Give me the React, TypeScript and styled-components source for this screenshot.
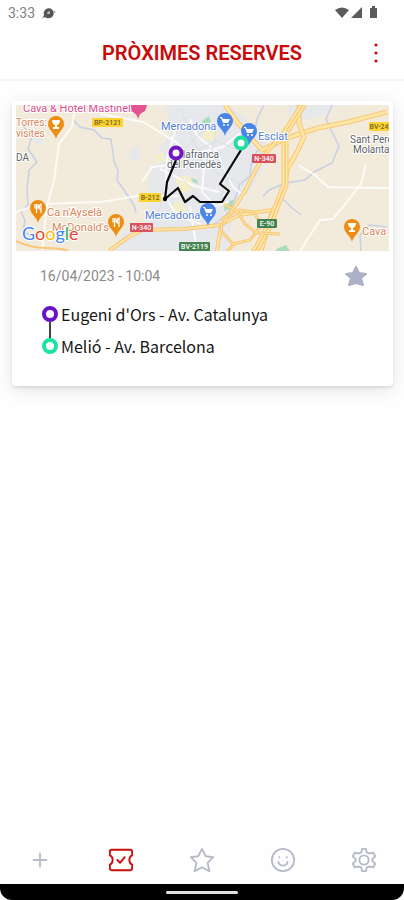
import React from "react";
import styled, { createGlobalStyle } from "styled-components";

const GlobalStyle = createGlobalStyle`
  *, *::before, *::after { box-sizing: border-box; }
  body { margin: 0; background: #fefefe; font-family: Roboto, sans-serif; }
`;

const Screen = styled.div`
  min-height: 100vh;
  display: flex;
  flex-direction: column;
  background: #fefefe;
`;

const StatusBar = styled.div`
  display: flex;
  align-items: center;
  justify-content: space-between;
  height: 26px;
  padding: 0 25px 0 8px;
  color: #808080;
  font-size: 14px;
`;

const StatusGroup = styled.div`
  display: flex;
  align-items: center;
  gap: 6px;
`;

const Header = styled.header`
  display: grid;
  grid-template-columns: 40px 1fr 40px;
  align-items: center;
  height: 55px;
  padding: 0 8px;
  border-bottom: 2px solid #f7f7f7;
`;

const Title = styled.h1`
  grid-column: 2;
  margin: 0;
  color: #c80a0a;
  font-size: 20px;
  font-weight: 600;
  line-height: 24px;
  text-align: center;
  white-space: nowrap;
`;

const IconButton = styled.button`
  display: grid;
  place-items: center;
  height: 40px;
  padding: 0;
  border: 0;
  background: none;
  cursor: pointer;
`;

const Main = styled.main`
  flex: 1;
  padding: 20px 11px 20px 12px;
`;

const Card = styled.article`
  padding: 4px 4px 24px;
  border-radius: 4px;
  background: #fff;
  box-shadow: 0 2px 3px rgba(0, 0, 0, 0.09), 0 4px 18px rgba(0, 0, 0, 0.1);
`;

const MapPicture = styled.svg`
  display: block;
  width: 100%;
  height: auto;
`;

const CardTop = styled.div`
  display: flex;
  align-items: center;
  justify-content: space-between;
  padding: 5px 13px 0 24px;
`;

const DateText = styled.time`
  color: #8a8a8a;
  font-size: 14px;
  line-height: 20px;
`;

const StarButton = styled(IconButton)`
  width: 40px;
`;

const Stops = styled.ol`
  list-style: none;
  margin: 0;
  padding: 2px 26px 0;
`;

const Stop = styled.li`
  display: flex;
  align-items: center;
  gap: 3px;
  height: 32px;
  color: #161616;
  font-family: "Noto Sans CJK SC", sans-serif;
  font-size: 16px;
  line-height: 24px;
`;

const Marker = styled.span<{ $color: string; $linked?: boolean }>`
  position: relative;
  flex: none;
  width: 16px;
  height: 16px;
  border: 4px solid ${(p) => p.$color};
  border-radius: 50%;

  &::after {
    content: "";
    display: ${(p) => (p.$linked ? "block" : "none")};
    position: absolute;
    top: 12px;
    left: 3px;
    width: 2px;
    height: 18px;
    background: #444;
  }
`;

const Nav = styled.nav`
  display: grid;
  grid-template-columns: repeat(5, 1fr);
  height: 48px;
`;

const NavButton = styled.button<{ $active?: boolean }>`
  display: grid;
  place-items: center;
  padding: 0;
  border: 0;
  background: none;
  color: ${(p) => (p.$active ? "#cc0d0d" : "#b7bbc8")};
  cursor: pointer;
`;

const Icon = styled.svg`
  width: 26px;
  height: 26px;
  fill: none;
  stroke: currentColor;
  stroke-width: 2;
  stroke-linecap: round;
  stroke-linejoin: round;
`;

const SystemBar = styled.div`
  display: grid;
  justify-items: center;
  align-items: center;
  height: 16px;
  border-radius: 0 0 12px 12px;
  background: #000;

  &::after {
    content: "";
    width: 72px;
    height: 3px;
    border-radius: 2px;
    background: #e4dfe2;
  }
`;

const PIN = "M0 12C-1 6-8 3-8-3a8 8 0 0 1 16 0C8 3 1 6 0 12Z";

type PinKind = "food" | "shop" | "wine";

const GLYPHS: Record<PinKind, React.ReactNode> = {
  food: <path d="M-3-7v4h3v-4M-1.5-7V2M3 2v-9q-2 1-2 5h2" fill="none" stroke="#fff" strokeWidth="1.2" />,
  shop: (
    <g fill="#fff">
      <path d="M-5-7h2l1 2h7L3-1h-5L-4-6h-1Z" />
      <circle cx="-1" cy="1" r="1" />
      <circle cx="3" cy="1" r="1" />
    </g>
  ),
  wine: <path d="M-4-7h8q0 4-3 5v2h2v2h-6V0h2v-2q-3-1-3-5Z" fill="#fff" />,
};

function Pin({ x, y, kind }: { x: number; y: number; kind: PinKind }) {
  return (
    <g transform={`translate(${x} ${y})`}>
      <path d={PIN} fill={kind === "shop" ? "#4a86e8" : "#ee8d14"} />
      {GLYPHS[kind]}
    </g>
  );
}

function Shield({ x, y, w, label, fill, ink = "#fff" }: {
  x: number; y: number; w: number; label: string; fill: string; ink?: string;
}) {
  return (
    <g>
      <rect x={x} y={y} width={w} height="9" rx="1" fill={fill} />
      <text x={x + w / 2} y={y + 7} textAnchor="middle" fontSize="7" fontWeight="500" fill={ink}>{label}</text>
    </g>
  );
}

function Road({ d, w }: { d: string; w: number }) {
  return (
    <g fill="none" strokeLinejoin="round">
      <path d={d} stroke="#f7c777" strokeWidth={w} />
      <path d={d} stroke="#ffe6a5" strokeWidth={w - 2} />
      {w > 5 && <path d={d} stroke="#f5bc66" strokeWidth="1" />}
    </g>
  );
}

function RouteMap() {
  return (
    <MapPicture viewBox="16 104 373 146" role="img" aria-label="Mapa de la ruta" fontFamily="Roboto, sans-serif">
      <rect x="16" y="104" width="373" height="146" fill="#f2ebdb" />
      <g fill="#e6e8ec">
        <path d="M166 104h63l35 31 2 28-15 25-17 18-7 44h-53l-24-25-2-43 9-32 15-18Z" />
        <path d="M287 104h50l-13 10-34 8ZM134 146l-7 10 13 5v-16Z" />
        <path d="M151 217l-27 14-13 19h74l-12-28Z" />
        <path d="M30 137l8 8 6-6-10-8Z" />
      </g>
      <g fill="#f4eecb">
        <path d="M174 177l15-3 5 13-11 6ZM171 205l9-6 7 11-9 3ZM205 127l14 4-6 10-11-4ZM155 154l8-3 2 9-9 3Z" />
      </g>
      <g fill="#abddb8">
        <path d="M202 120l7-5 2 6-8 4ZM191 177l6 2 1 4-5-2ZM225 202l10-4-3 9-8 3ZM278 247l8-3 4 6h-15Z" />
      </g>
      <g fill="none" stroke="#c8d0e6" strokeWidth="1.5">
        <path d="M73 119l7 7 14 3 8 8 9 1 3 22 4 10-1 9 7 10 10 15 2 8" />
        <path d="M23 125l9 10-4 13 9 13-8 8-2 20 1 15-7 6 4 10-2 10 8 5" />
        <path d="M264 104l-7 14-4 20 6 10-7 9-2 18-10 8-8 24-7 8-11 8" />
        <path d="M332 104l-6 14 6 13 7 14-7 17-18 9-9 8-19 3-17 7-6 6" />
        <path d="M281 196l10 10 10 8M361 250l-1-16 9-10 18 2" />
      </g>
      <g fill="none" stroke="#fff" strokeWidth="2" opacity=".8">
        <path d="M75 107l-3 19-13 17-5 37-7 24-5 46M16 211l22-8 63-2 42-7 35 1M100 113l43 8 33 20M298 164l17 10 13 12 62 1M300 250l20-31 13-1 28-35 5-20" />
        <path d="M190 118l7 17 19 15 17 36 12 10M160 168l35 17 24 6M190 205l7 45M171 136l17 18 35-8 20-16M205 155l-3 36 13 14 14-4M142 181l10-15 18-2M176 127l-9 30-2 38 12 20 24 8" />
      </g>
      <g fill="none" stroke="#dcdfe4">
        <path d="M158 214l10-34 18-26 31-14 23 10M181 108l13 34 23 30 26 12M205 128l-19 18-7 28 20 22M218 121l-6 28 18 25-13 30" />
      </g>
      <Road d="M109 250l21-15 13-6 41-1 36-4 19-10 33-5" w={4} />
      <path d="M16 240q14 7 30 7t22 3" fill="none" stroke="#f7c777" strokeWidth="2" />
      <Road d="M225 104l13 18 14 16 10 11 25-12 31-10 30-6 39-10" w={5} />
      <Road d="M305 104l-20 26-23 27-17 33-11 17-13 18-4 25" w={4} />
      <Road d="M299 104v18l5 14-7 15-10 18-3 20-13 26-10 35" w={5} />
      <Road d="M303 104l-18 28v52l-17 43-14 25" w={7} />
      <Road d="M224 203l13 7 8 13 12 9 23 1M239 209l-16 8-2 13 12 13 17-4 12-15-9-13ZM235 243l-8 7" w={3} />

      <g fontSize="10" strokeWidth="2" paintOrder="stroke" strokeLinejoin="round" stroke="#fff">
        <g fill="#da4c91" fontSize="11">
          <text x="23" y="111">Cava &amp; Hotel Mastinell</text>
        </g>
        <g fill="#d88456">
          <text x="16" y="125">Torres:</text>
          <text x="16" y="136">visites</text>
        </g>
        <g fill="#d88456" fontSize="11">
          <text x="47" y="215">Ca n'Ayselà</text>
          <text x="52" y="230">McDonald's</text>
          <text x="362" y="234">Cava</text>
        </g>
        <g fill="#5480d5" fontSize="11">
          <text x="161" y="129">Mercadona</text>
          <text x="145" y="218">Mercadona</text>
          <text x="258" y="139">Esclat</text>
        </g>
        <g fill="#5e626a">
          <text x="174" y="157">Vilafranca</text>
          <text x="167" y="167">del Penedès</text>
          <text x="350" y="142">Sant Pere</text>
          <text x="353" y="152">Molanta</text>
          <text x="16" y="160">DA</text>
        </g>
      </g>
      <Shield x={92} y={117} w={31} label="BP-2121" fill="#fbd434" ink="#78631b" />
      <Shield x={139} y={192} w={22} label="B-212" fill="#fbd434" ink="#78631b" />
      <Shield x={369} y={121} w={28} label="BV-2429" fill="#fbd434" ink="#78631b" />
      <Shield x={252} y={153} w={24} label="N-340" fill="#d9515c" />
      <Shield x={130} y={222} w={23} label="N-340" fill="#d9515c" />
      <Shield x={257} y={218} w={20} label="E-90" fill="#458350" />
      <Shield x={179} y={241} w={31} label="BV-2119" fill="#458350" />

      <path d="M131 104h16l-2 6-5 3-2 5q-1-5-4-6-3-3-3-8Z" fill="#e45291" />
      <Pin x={56} y={126} kind="wine" />
      <Pin x={38} y={210} kind="food" />
      <Pin x={116} y={224} kind="food" />
      <Pin x={352} y={229} kind="wine" />
      <Pin x={225} y={123} kind="shop" />
      <Pin x={249} y={133} kind="shop" />
      <Pin x={208} y={213} kind="shop" />

      <path d="M176 159l-9 22-2 17 13-11 7 14 8-6 7 6h22l7-11-9-7 21-34" fill="none" stroke="#090909" strokeWidth="2.2" strokeLinejoin="round" />
      <circle cx="165" cy="198" r="2.2" />
      <circle cx="176" cy="152" r="5.5" fill="#fff" stroke="#6f17c8" strokeWidth="4" />
      <circle cx="241" cy="142" r="5.5" fill="#fff" stroke="#21dda0" strokeWidth="4" />

      <text x="22" y="239" fontFamily="Lato, sans-serif" fontSize="18" stroke="#fff" strokeWidth="2" paintOrder="stroke">
        <tspan fill="#4285f4">G</tspan>
        <tspan fill="#ea4335">o</tspan>
        <tspan fill="#fbbc05">o</tspan>
        <tspan fill="#4285f4">g</tspan>
        <tspan fill="#34a853">l</tspan>
        <tspan fill="#ea4335">e</tspan>
      </text>
    </MapPicture>
  );
}

const STOPS = [
  { name: "Eugeni d'Ors - Av. Catalunya", color: "#6b11c7" },
  { name: "Melió - Av. Barcelona", color: "#18e5a1" },
];

const TABS = [
  { label: "Nova reserva", icon: <path d="M14 7v14M7 14h14" /> },
  {
    label: "Reserves",
    icon: (
      <>
        <path d="M4 3h20q2 0 2 2v4q-3 1-3 5t3 5v4q0 2-2 2H4q-2 0-2-2v-4q3-1 3-5T2 9V5q0-2 2-2Z" />
        <path d="M10 14l3 3 5-6" />
      </>
    ),
  },
  { label: "Preferits", icon: <path d="M14 2l4 8 8 1-6 6 2 9-8-4-8 4 2-9-6-6 8-1Z" /> },
  {
    label: "Perfil",
    icon: (
      <>
        <circle cx="14" cy="14" r="12" />
        <path d="M9 16q1 4 5 4t5-4M10 11h.1M18 11h.1" />
      </>
    ),
  },
  {
    label: "Configuració",
    icon: (
      <>
        <path d="M12 2h4l1 4 3 1 4-1 2 4-3 3v2l3 3-2 4-4-1-3 1-1 4h-4l-1-4-3-1-4 1-2-4 3-3v-2l-3-3 2-4 4 1 3-1Z" />
        <circle cx="14" cy="14" r="5" />
      </>
    ),
  },
];

export default function App() {
  return (
    <Screen>
      <GlobalStyle />
      <StatusBar>
        <StatusGroup>
          <span>3:33</span>
          <svg width="15" height="14" viewBox="0 0 15 14" aria-hidden="true">
            <path d="M1 13l2-4a5 5 0 1 1 3 3l-3-1Z" fill="#555" />
            <path d="M6 7h3M8 5v3" stroke="#ddd" />
            <circle cx="13.5" cy="6" r="1" fill="#aaa" />
          </svg>
        </StatusGroup>
        <svg width="44" height="14" viewBox="0 0 44 14" fill="#5b5b5b" aria-hidden="true">
          <path d="M0 4q7-5 14 0L7 12ZM16 12L27 1v11ZM35 2h2V0h3v2h2v10h-7Z" />
        </svg>
      </StatusBar>
      <Header>
        <Title>PRÒXIMES RESERVES</Title>
        <IconButton aria-label="Més opcions">
          <svg width="4" height="20" viewBox="0 0 4 20" fill="#c80a0a" aria-hidden="true">
            <circle cx="2" cy="2" r="1.6" />
            <circle cx="2" cy="10" r="1.6" />
            <circle cx="2" cy="18" r="1.6" />
          </svg>
        </IconButton>
      </Header>
      <Main>
        <Card>
          <RouteMap />
          <CardTop>
            <DateText dateTime="2023-04-16T10:04">16/04/2023 - 10:04</DateText>
            <StarButton aria-label="Afegeix a preferits">
              <svg width="24" height="24" viewBox="0 0 24 24" fill="#acb1c6" stroke="#acb1c6" strokeWidth="2" strokeLinejoin="round" aria-hidden="true">
                <path d="M12 3l3 6 7 1-5 4 2 7-7-2-7 2 2-7-5-4 7-1Z" />
              </svg>
            </StarButton>
          </CardTop>
          <Stops>
            {STOPS.map((stop, i) => (
              <Stop key={stop.name}>
                <Marker $color={stop.color} $linked={i < STOPS.length - 1} />
                <span>{stop.name}</span>
              </Stop>
            ))}
          </Stops>
        </Card>
      </Main>
      <Nav aria-label="Navegació principal">
        {TABS.map((tab, i) => (
          <NavButton key={tab.label} $active={i === 1} aria-label={tab.label} aria-current={i === 1 ? "page" : undefined}>
            <Icon viewBox="0 0 28 28" aria-hidden="true">{tab.icon}</Icon>
          </NavButton>
        ))}
      </Nav>
      <SystemBar />
    </Screen>
  );
}
